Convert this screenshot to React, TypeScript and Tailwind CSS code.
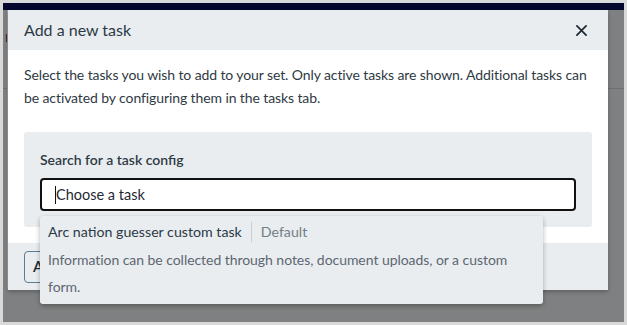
import React from "react";

export default function App() {
  return (
    <div
      className="w-[627px] h-[325px] bg-[#d9d9d9] p-[3px] overflow-hidden"
      style={{ fontFamily: "Lato, 'Noto Sans', sans-serif" }}
    >
      <div className="relative w-full h-full bg-[#7f8081] overflow-hidden">
        {/* background page hints */}
        <div className="h-[7px] bg-[#05062e]" />
        <div className="absolute left-[2px] top-[22px] text-[15px] text-[#1d1d1d]">r</div>
        <div className="absolute left-0 right-0 top-[85px] h-px bg-[#6f7071]" />
        <div className="absolute left-[4px] top-[7px] bottom-[33px] w-px bg-[#9a9b9c]" />

        {/* modal */}
        <div className="absolute left-[5px] top-[7px] w-[600px] h-[280px] bg-white flex flex-col shadow-[0_2px_4px_rgba(0,0,0,0.25)]">
          <div className="h-[40px] bg-[#e9edf0] flex items-center justify-between pl-[16px] pr-[21px]">
            <span className="text-[16px] text-[#2c3a46]">Add a new task</span>
            <svg width="11" height="11" viewBox="0 0 12 12" className="text-[#1f2933]">
              <path d="M1 1 L11 11 M11 1 L1 11" stroke="currentColor" strokeWidth="1.9" strokeLinecap="round" />
            </svg>
          </div>
          <div className="flex-1 px-[16px] pt-[13px]">
            <p className="text-[14px] tracking-[-0.1px] leading-[23px] text-[#2f3a44]">
              Select the tasks you wish to add to your set. Only active tasks are shown. Additional tasks can be activated by configuring them in the tasks tab.
            </p>
            <div className="mt-[23px] h-[95px] bg-[#e9edf0] rounded-[3px] px-[16px] pt-[18px]">
              <div className="text-[14px] font-semibold text-[#2f3a44] leading-[20px]">Search for a task config</div>
              <div className="mt-[8px] h-[33px] bg-white border-2 border-[#111] rounded-[4px] flex items-center pl-[13px]">
                <span className="w-px h-[18px] bg-[#111]" />
                <span className="text-[14.5px] text-[#1f2933]">Choose a task</span>
              </div>
            </div>
          </div>
          <div className="h-[47px] bg-[#e9edf0] flex items-center px-[16px]">
            <div className="h-[32px] w-[80px] border border-[#5b7d8d] rounded-[4px] flex items-center pl-[8px] text-[15px] font-semibold text-[#1f2933]">
              Add
            </div>
          </div>
        </div>

        {/* dropdown */}
        <div className="absolute left-[37px] top-[213px] w-[503px] h-[88px] bg-[#e9edf0] rounded-[3px] shadow-[0_2px_5px_rgba(0,0,0,0.3)] px-[8px] pt-[4px]">
          <div className="flex items-center h-[24px]">
            <span className="text-[14.2px] text-[#2c3a46]">Arc nation guesser custom task</span>
            <span className="mx-[9px] w-px h-[20px] bg-[#c9cfd4]" />
            <span className="text-[14.2px] text-[#737d86]">Default</span>
          </div>
          <p className="mt-[2px] text-[14px] tracking-[-0.05px] leading-[27px] text-[#5d6770]">
            Information can be collected through notes, document uploads, or a custom form.
          </p>
        </div>
      </div>
    </div>
  );
}
